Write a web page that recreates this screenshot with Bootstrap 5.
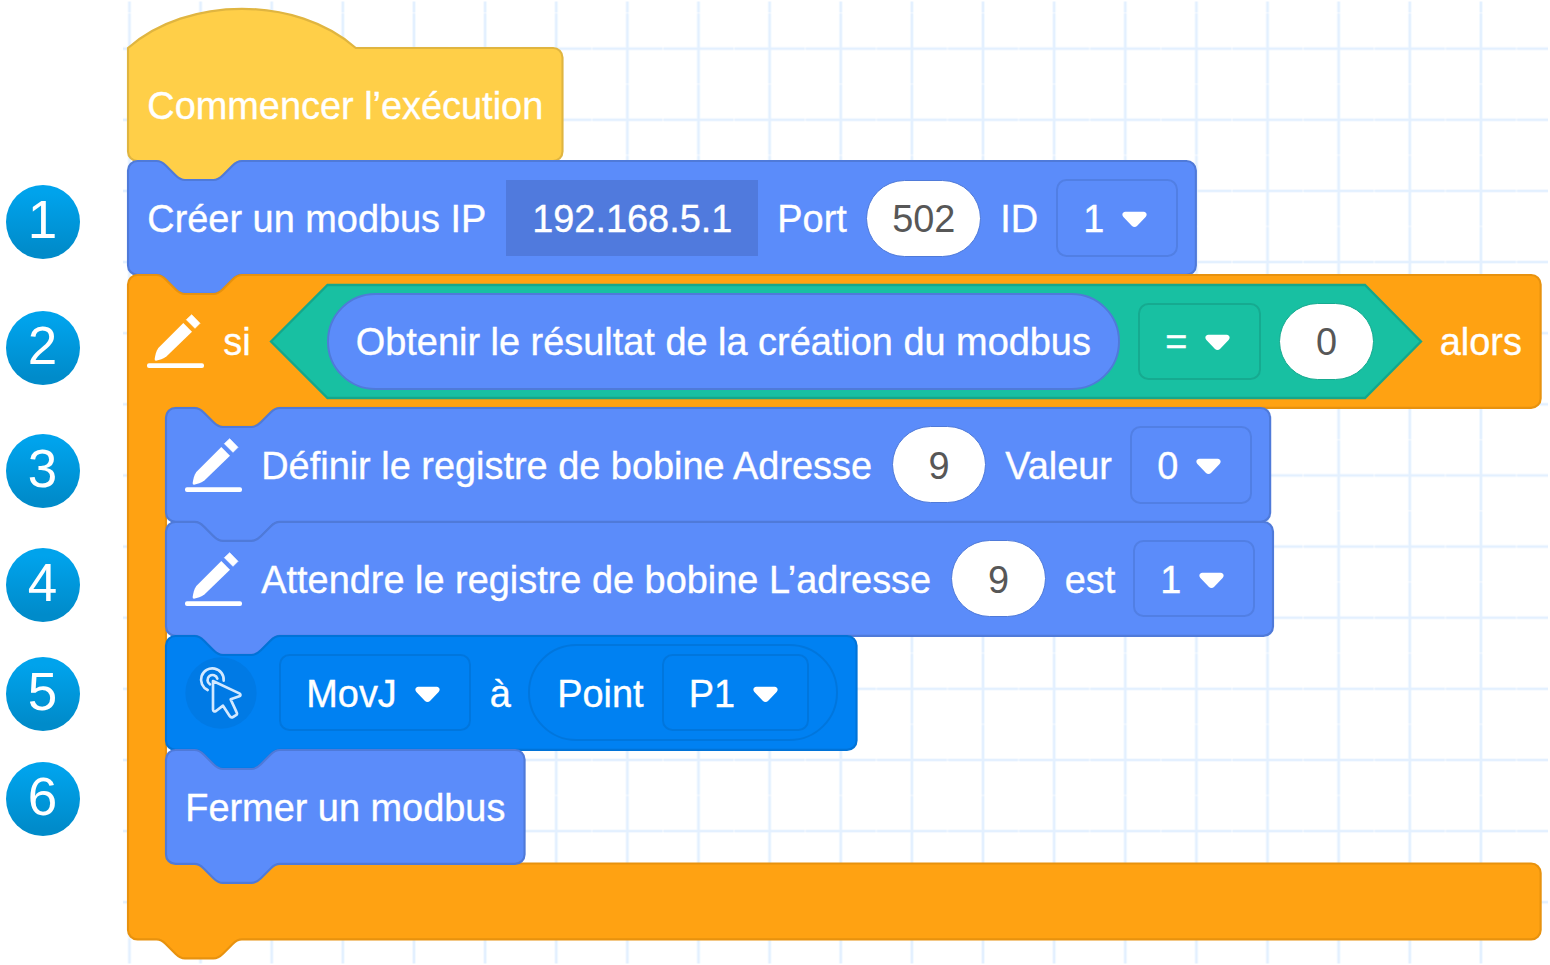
<!DOCTYPE html>
<html lang="fr">
<head>
<meta charset="utf-8">
<meta name="viewport" content="width=device-width, initial-scale=1">
<title>Programme modbus</title>
<link rel="stylesheet" href="https://cdn.jsdelivr.net/npm/bootstrap@5.3.0/dist/css/bootstrap.min.css">
<style>
:root { --u: 2.373px; }
body { background: #fff; font-family: "Liberation Sans", Arial, sans-serif; font-size: 37.9px; line-height: 1; width: 1550px; height: 965px; }
.layers { display: grid; grid-template-rows: minmax(0, 1fr); }
.layers > * { grid-area: 1 / 1; min-width: 0; min-height: 0; }
.steps { width: 123px; padding: 185px 0 0 5.5px; display: grid; grid-template-rows: 126px 123.3px 114px 109px 105px 74px; align-content: start; }
.step-no { width: 74px; height: 74px; font-size: 53px; line-height: 69px; background: linear-gradient(#00a3ec 10%, #008bca 90%); }
.canvas-area { width: 1427px; height: 965px; }
.stack { padding: 48px 0 0 5.3px; }
.shape { width: 100%; height: 100%; overflow: visible; display: block; }
.shape path { stroke-width: .9; }
.blk { height: calc(48 * var(--u)); }
.blk-hat { height: 113.1px; width: 434.5px; }
.line-row { padding-left: 19px; gap: 19px; color: #fff; white-space: nowrap; }
.line-row > * { flex: none; }
.lbl { padding-top: 4px; -webkit-text-stroke: .35px currentColor; }
.pill .lbl { -webkit-text-stroke: 0; }
.c-head { height: calc(56 * var(--u)); }
.c-body { margin-left: calc(16 * var(--u)); }
.c-foot { height: calc(32 * var(--u)); }
.yellow { fill: #ffcf48; stroke: #e0b540; }
.blue { fill: #5b8cfa; stroke: #4f7ad9; }
.orange { fill: #ffa212; stroke: #e8920e; }
.azure { fill: #0081f2; stroke: #0073d8; }
.hex .shape path { stroke-width: 2.3; }
.teal { fill: #18c0a2; stroke: #14a78c; }
.ip { width: 252px; height: 76px; background: #507add; }
.pill { height: 77px; border: 1.7px solid #4f7ad9; border-radius: 38.5px; background: #fff; color: #575757; }
.dd { height: 77.5px; border: 2.2px solid #517fe4; border-radius: 10.5px; padding: 0 29px 0 25px; }
.dd svg { width: 25px; height: 17px; margin-top: 3px; }
.on-teal { border-color: #16aa90; }
.on-azure { border-color: #0076dd; }
.oval { height: 96.6px; border: 2.2px solid #4f7ad9; border-radius: 48.3px; background: #5b8cfa; padding-left: 27px; }
.oval-azure { border-color: #0076dd; background: transparent; }
.hex { width: 1152px; height: 115px; }
.hex-in { padding-left: 57px; gap: 18px; }
.pen { width: 57px; height: 57px; fill: #fff; margin-top: 1px; }
</style>
</head>
<body class="overflow-hidden">
<svg width="0" height="0" class="position-absolute" aria-hidden="true">
  <symbol id="pen" viewBox="0 0 171 171">
    <rect x="0" y="151" width="171" height="14" rx="6"/>
    <path d="M134 5 159 31 144 46 118 20Z" stroke="#fff" stroke-width="2" stroke-linejoin="round"/>
    <path d="M109 30 135 56 59 130C49 138 37 141 27 143Q22 143 23 137C25 126 27 115 34 105Z"/>
  </symbol>
  <symbol id="caret" viewBox="0 0 25 17">
    <path d="M3.4 .7H21.6C24.6 .7 25.6 4 23.6 6L15 14.9C13.6 16.3 11.4 16.3 10 14.9L1.4 6C-.6 4 .4 .7 3.4 .7Z" fill="#fff"/>
  </symbol>
</svg>
<main class="d-flex">
  <aside class="steps flex-shrink-0">
    <div class="step-no rounded-circle text-white text-center">1</div>
    <div class="step-no rounded-circle text-white text-center">2</div>
    <div class="step-no rounded-circle text-white text-center">3</div>
    <div class="step-no rounded-circle text-white text-center">4</div>
    <div class="step-no rounded-circle text-white text-center">5</div>
    <div class="step-no rounded-circle text-white text-center">6</div>
  </aside>
  <section class="canvas-area layers flex-shrink-0">
    <svg width="1427" height="965" aria-hidden="true">
      <defs>
        <pattern id="grid" x="-29.1" y="13.1" width="71.13" height="71.13" patternUnits="userSpaceOnUse">
          <path d="M35.56 .6V70.5M.6 35.56H70.5" stroke="#e2f0ff" stroke-width="2.6"/>
          <path d="M35.56 0V71.13M0 35.56H71.13" stroke="#e2f0ff" stroke-width="2.6" opacity=".4"/>
        </pattern>
      </defs>
      <rect y="1.5" width="1425" height="962" fill="url(#grid)"/>
    </svg>
    <div class="stack d-flex flex-column align-items-start">
      <div class="blk-hat layers">
        <svg class="shape"><g transform="scale(2.373)"><path class="yellow" d="M0 0C25-22 71-22 96 0H179.1a4 4 0 0 1 4 4V43.66a4 4 0 0 1-4 4H48c-2 0-3 1-4 2l-4 4c-1 1-2 2-4 2H24c-2 0-3-1-4-2l-4-4c-1-1-2-2-4-2H4a4 4 0 0 1-4-4Z"/></g></svg>
        <div class="line-row d-flex align-items-center"><span class="lbl">Commencer l’exécution</span></div>
      </div>
      <div class="blk layers" style="width:1068px">
        <svg class="shape"><g transform="scale(2.373)"><path class="blue" d="M0 4A4 4 0 0 1 4 0H12c2 0 3 1 4 2l4 4c1 1 2 2 4 2H36c2 0 3-1 4-2l4-4c1-1 2-2 4-2H446a4 4 0 0 1 4 4V44a4 4 0 0 1-4 4H48c-2 0-3 1-4 2l-4 4c-1 1-2 2-4 2H24c-2 0-3-1-4-2l-4-4c-1-1-2-2-4-2H4a4 4 0 0 1-4-4Z"/></g></svg>
        <div class="line-row d-flex align-items-center">
          <span class="lbl" style="width:340px">Créer un modbus IP</span>
          <span class="ip d-flex align-items-center justify-content-center"><span class="lbl">192.168.5.1</span></span>
          <span class="lbl" style="width:70px">Port</span>
          <span class="pill d-flex align-items-center justify-content-center" style="width:115px"><span class="lbl">502</span></span>
          <span class="lbl" style="width:37px">ID</span>
          <span class="dd d-flex align-items-center justify-content-between" style="width:122px"><span class="lbl">1</span><svg><use href="#caret"/></svg></span>
        </div>
      </div>
      <div class="layers" style="width:1412.6px">
        <svg class="shape"><g transform="scale(2.373)"><path class="orange" d="M0 4A4 4 0 0 1 4 0H12c2 0 3 1 4 2l4 4c1 1 2 2 4 2H36c2 0 3-1 4-2l4-4c1-1 2-2 4-2H591.3a4 4 0 0 1 4 4V52a4 4 0 0 1-4 4H64c-2 0-3 1-4 2l-4 4c-1 1-2 2-4 2H40c-2 0-3-1-4-2l-4-4c-1-1-2-2-4-2H20a4 4 0 0 0-4 4V244a4 4 0 0 0 4 4H591.3a4 4 0 0 1 4 4V276a4 4 0 0 1-4 4H48c-2 0-3 1-4 2l-4 4c-1 1-2 2-4 2H24c-2 0-3-1-4-2l-4-4c-1-1-2-2-4-2H4a4 4 0 0 1-4-4Z"/></g></svg>
        <div class="d-flex flex-column">
          <div class="c-head line-row d-flex align-items-center">
            <svg class="pen"><use href="#pen"/></svg>
            <span class="lbl" style="width:27.5px">si</span>
            <div class="hex layers">
              <svg class="shape"><path class="teal" d="M1 57.5 57.5 1H1095L1151 57.5 1095 114H57.5Z"/></svg>
              <div class="hex-in d-flex align-items-center">
                <div class="oval d-flex align-items-center" style="width:793.5px"><span class="lbl">Obtenir le résultat de la création du modbus</span></div>
                <span class="dd on-teal d-flex align-items-center justify-content-between" style="width:123px"><span class="lbl">=</span><svg><use href="#caret"/></svg></span>
                <span class="pill on-teal d-flex align-items-center justify-content-center" style="width:94.5px"><span class="lbl">0</span></span>
              </div>
            </div>
            <span class="lbl" style="margin-left:-1px">alors</span>
          </div>
          <div class="c-body d-flex flex-column align-items-start">
            <div class="blk layers" style="width:1104.2px">
              <svg class="shape"><g transform="scale(2.373)"><path class="blue" d="M0 4A4 4 0 0 1 4 0H12c2 0 3 1 4 2l4 4c1 1 2 2 4 2H36c2 0 3-1 4-2l4-4c1-1 2-2 4-2H461.3a4 4 0 0 1 4 4V44a4 4 0 0 1-4 4H48c-2 0-3 1-4 2l-4 4c-1 1-2 2-4 2H24c-2 0-3-1-4-2l-4-4c-1-1-2-2-4-2H4a4 4 0 0 1-4-4Z"/></g></svg>
              <div class="line-row d-flex align-items-center">
                <svg class="pen"><use href="#pen"/></svg>
                <span class="lbl" style="width:611.5px">Définir le registre de bobine Adresse</span>
                <span class="pill d-flex align-items-center justify-content-center" style="width:94.5px"><span class="lbl">9</span></span>
                <span class="lbl" style="width:106px">Valeur</span>
                <span class="dd d-flex align-items-center justify-content-between" style="width:122px"><span class="lbl">0</span><svg><use href="#caret"/></svg></span>
              </div>
            </div>
            <div class="blk layers" style="width:1107px">
              <svg class="shape"><g transform="scale(2.373)"><path class="blue" d="M0 4A4 4 0 0 1 4 0H12c2 0 3 1 4 2l4 4c1 1 2 2 4 2H36c2 0 3-1 4-2l4-4c1-1 2-2 4-2H462.5a4 4 0 0 1 4 4V44a4 4 0 0 1-4 4H48c-2 0-3 1-4 2l-4 4c-1 1-2 2-4 2H24c-2 0-3-1-4-2l-4-4c-1-1-2-2-4-2H4a4 4 0 0 1-4-4Z"/></g></svg>
              <div class="line-row d-flex align-items-center">
                <svg class="pen"><use href="#pen"/></svg>
                <span class="lbl" style="width:671px">Attendre le registre de bobine L’adresse</span>
                <span class="pill d-flex align-items-center justify-content-center" style="width:94.5px"><span class="lbl">9</span></span>
                <span class="lbl" style="width:49.5px">est</span>
                <span class="dd d-flex align-items-center justify-content-between" style="width:122px"><span class="lbl">1</span><svg><use href="#caret"/></svg></span>
              </div>
            </div>
            <div class="blk layers" style="width:690.5px">
              <svg class="shape"><g transform="scale(2.373)"><path class="azure" d="M0 4A4 4 0 0 1 4 0H12c2 0 3 1 4 2l4 4c1 1 2 2 4 2H36c2 0 3-1 4-2l4-4c1-1 2-2 4-2H287a4 4 0 0 1 4 4V44a4 4 0 0 1-4 4H48c-2 0-3 1-4 2l-4 4c-1 1-2 2-4 2H24c-2 0-3-1-4-2l-4-4c-1-1-2-2-4-2H4a4 4 0 0 1-4-4Z"/></g></svg>
              <div class="line-row d-flex align-items-center">
                <svg width="75" height="72" viewBox="0 0 225 216" fill="none" stroke="#d3e9ff" stroke-width="8" stroke-linejoin="round" stroke-linecap="round">
                  <circle cx="108" cy="108" r="107" fill="#007ae5" stroke="none"/>
                  <path d="M68 99A34 34 0 1 1 116 71"/>
                  <path d="M75 82A15 15 0 1 1 97 65"/>
                  <path d="M84 72 163 109Q170 114 163 118L137 127 155 166Q158 172 152 175L144 180Q138 183 134 177L114 146 93 162Q85 166 84 158Z"/>
                </svg>
                <span class="dd on-azure d-flex align-items-center justify-content-between" style="width:191.5px"><span class="lbl">MovJ</span><svg><use href="#caret"/></svg></span>
                <span class="lbl" style="width:19.5px">à</span>
                <div class="oval oval-azure d-flex align-items-center" style="width:309.5px; gap:18px">
                  <span class="lbl">Point</span>
                  <span class="dd on-azure d-flex align-items-center justify-content-between" style="width:147.5px"><span class="lbl">P1</span><svg><use href="#caret"/></svg></span>
                </div>
              </div>
            </div>
            <div class="blk layers" style="width:358.5px">
              <svg class="shape"><g transform="scale(2.373)"><path class="blue" d="M0 4A4 4 0 0 1 4 0H12c2 0 3 1 4 2l4 4c1 1 2 2 4 2H36c2 0 3-1 4-2l4-4c1-1 2-2 4-2H147.1a4 4 0 0 1 4 4V44a4 4 0 0 1-4 4H48c-2 0-3 1-4 2l-4 4c-1 1-2 2-4 2H24c-2 0-3-1-4-2l-4-4c-1-1-2-2-4-2H4a4 4 0 0 1-4-4Z"/></g></svg>
              <div class="line-row d-flex align-items-center"><span class="lbl">Fermer un modbus</span></div>
            </div>
          </div>
          <div class="c-foot"></div>
        </div>
      </div>
    </div>
  </section>
</main>
<script src="https://cdn.jsdelivr.net/npm/bootstrap@5.3.0/dist/js/bootstrap.bundle.min.js"></script>
</body>
</html>
